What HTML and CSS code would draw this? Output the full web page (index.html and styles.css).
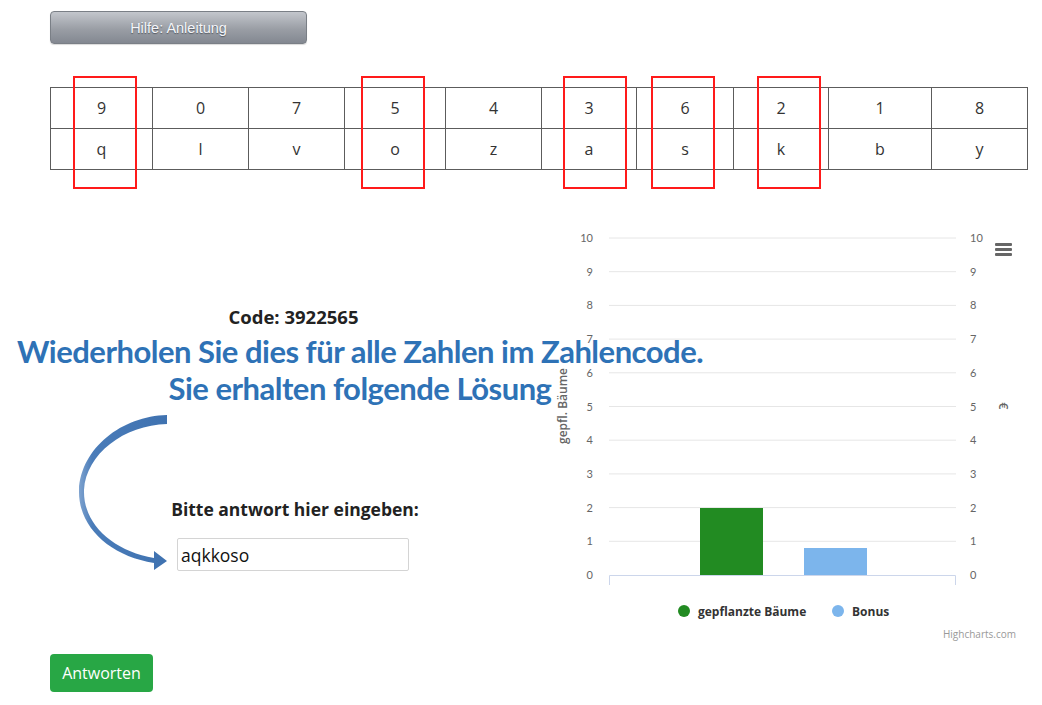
FILE: index.html
```html
<!DOCTYPE html>
<html lang="de">
<head>
<meta charset="utf-8">
<title>Zahlencode</title>
<link rel="stylesheet" href="styles.css">
</head>
<body>
<div class="page">
  <header class="toolbar">
    <button class="help-btn" type="button">Hilfe: Anleitung</button>
  </header>

  <section class="cipher">
    <table class="cipher-table">
      <colgroup>
        <col class="w102"><col class="w96"><col class="w96"><col class="w101"><col class="w96">
        <col class="w95"><col class="w97"><col class="w95"><col class="w103"><col class="w96">
      </colgroup>
      <tr><td>9</td><td>0</td><td>7</td><td>5</td><td>4</td><td>3</td><td>6</td><td>2</td><td>1</td><td>8</td></tr>
      <tr><td>q</td><td>l</td><td>v</td><td>o</td><td>z</td><td>a</td><td>s</td><td>k</td><td>b</td><td>y</td></tr>
    </table>
    <div class="mark mark-1"></div>
    <div class="mark mark-2"></div>
    <div class="mark mark-3"></div>
    <div class="mark mark-4"></div>
    <div class="mark mark-5"></div>
  </section>

  <section class="main">
    <div class="answer-col">
      <p class="code">Code: 3922565</p>
      <label class="answer-label" for="answer">Bitte antwort hier eingeben:</label>
      <input class="answer-input" id="answer" type="text" value="aqkkoso">
    </div>
    <div class="chart">
      <svg class="chart-svg" width="480" height="425" viewBox="0 0 480 425">
        <g class="grid">
          <line x1="54" y1="18" x2="401" y2="18"/>
          <line x1="54" y1="51.7" x2="401" y2="51.7"/>
          <line x1="54" y1="85.4" x2="401" y2="85.4"/>
          <line x1="54" y1="119.1" x2="401" y2="119.1"/>
          <line x1="54" y1="152.8" x2="401" y2="152.8"/>
          <line x1="54" y1="186.5" x2="401" y2="186.5"/>
          <line x1="54" y1="220.2" x2="401" y2="220.2"/>
          <line x1="54" y1="253.9" x2="401" y2="253.9"/>
          <line x1="54" y1="287.6" x2="401" y2="287.6"/>
          <line x1="54" y1="321.3" x2="401" y2="321.3"/>
        </g>
        <g class="axis-labels left">
          <text x="38" y="22">10</text>
          <text x="38" y="55.7">9</text>
          <text x="38" y="89.4">8</text>
          <text x="38" y="123.1">7</text>
          <text x="38" y="156.8">6</text>
          <text x="38" y="190.5">5</text>
          <text x="38" y="224.2">4</text>
          <text x="38" y="257.9">3</text>
          <text x="38" y="291.6">2</text>
          <text x="38" y="325.3">1</text>
          <text x="38" y="359">0</text>
        </g>
        <g class="axis-labels right">
          <text x="415" y="22">10</text>
          <text x="415" y="55.7">9</text>
          <text x="415" y="89.4">8</text>
          <text x="415" y="123.1">7</text>
          <text x="415" y="156.8">6</text>
          <text x="415" y="190.5">5</text>
          <text x="415" y="224.2">4</text>
          <text x="415" y="257.9">3</text>
          <text x="415" y="291.6">2</text>
          <text x="415" y="325.3">1</text>
          <text x="415" y="359">0</text>
        </g>
        <text class="axis-title" transform="translate(12,186) rotate(-90)">gepfl. Bäume</text>
        <text class="axis-title" transform="translate(444,186) rotate(90)">€</text>
        <rect class="bar-green" x="145" y="288" width="63" height="67"/>
        <rect class="bar-blue" x="249" y="328" width="63" height="27"/>
        <path class="x-axis" d="M54.5 365 V355.5 H400.5 V365"/>
        <g class="menu-icon">
          <rect x="440" y="23" width="17" height="3" rx="1"/>
          <rect x="440" y="28" width="17" height="3" rx="1"/>
          <rect x="440" y="33" width="17" height="3" rx="1"/>
        </g>
        <circle class="dot-green" cx="129" cy="391" r="6"/>
        <text class="legend" x="143" y="396">gepflanzte Bäume</text>
        <circle class="dot-blue" cx="283" cy="391" r="6"/>
        <text class="legend" x="297" y="396">Bonus</text>
        <text class="credits" x="461" y="418">Highcharts.com</text>
      </svg>
    </div>
  </section>

  <button class="submit-btn" type="button">Antworten</button>

  <div class="note">
    <p class="note-line">Wiederholen Sie dies für alle Zahlen im Zahlencode.</p>
    <p class="note-line">Sie erhalten folgende Lösung</p>
  </div>

  <svg class="arrow" width="110" height="170" viewBox="70 410 110 170">
    <defs>
      <linearGradient id="arrowGrad" x1="0" y1="0" x2="1" y2="0">
        <stop offset="0" stop-color="#7fa3cf"/>
        <stop offset="0.15" stop-color="#4a7cb9"/>
        <stop offset="1" stop-color="#3f72b0"/>
      </linearGradient>
    </defs>
    <path fill="url(#arrowGrad)" d="M167 415 C122 416 81 448 79 490 C78 527 110 556 154 563 L154 570 L167 561 L154 551 L154 558 C113 551 83 524 84 490 C86 454 124 425 167 424 Z"/>
  </svg>
</div>
</body>
</html>
```

FILE: styles.css
```css
html, body {
  margin: 0;
  padding: 0;
  background: #ffffff;
}

body {
  font-family: "Open Sans", "Noto Sans", "Liberation Sans", sans-serif;
  color: #222;
}

.page {
  position: relative;
  width: 1042px;
  height: 705px;
  box-sizing: border-box;
  padding: 11px 0 0 50px;
  overflow: hidden;
}

.toolbar {
  display: flex;
}

.help-btn {
  width: 257px;
  height: 33px;
  border: 1px solid #7a7f86;
  border-radius: 4px;
  background: linear-gradient(#c3c6cc, #9a9ea5 55%, #838891);
  color: #f4f6fa;
  font-family: "Liberation Sans", Arial, sans-serif;
  font-size: 14.5px;
  text-shadow: 0 1px 1px #555a62;
  box-shadow: 0 1px 1px rgba(0,0,0,0.15);
  padding: 0;
}

.cipher {
  position: relative;
  margin-top: 43px;
  width: 977px;
}

.cipher-table {
  width: 977px;
  table-layout: fixed;
  border-collapse: collapse;
  font-family: "Open Sans", "Noto Sans", sans-serif;
  font-size: 16px;
  color: #333;
}

.cipher-table td {
  border: 1px solid #5c5c5c;
  height: 40px;
  padding: 0;
  text-align: center;
  vertical-align: middle;
}

.w95 { width: 95px; }
.w96 { width: 96px; }
.w97 { width: 97px; }
.w101 { width: 101px; }
.w102 { width: 102px; }
.w103 { width: 103px; }

.mark {
  position: absolute;
  top: -11px;
  width: 60px;
  height: 109px;
  border: 2px solid #ff1a1a;
}

.mark-1 { left: 23px; }
.mark-2 { left: 311px; }
.mark-3 { left: 513px; }
.mark-4 { left: 601px; }
.mark-5 { left: 707px; }

.main {
  display: flex;
  margin-top: 50px;
  height: 425px;
}

.answer-col {
  width: 490px;
  display: flex;
  flex-direction: column;
  align-items: center;
}

.code {
  margin: 86px 0 0 -3px;
  line-height: 22px;
  font-size: 18.5px;
  font-weight: 700;
  color: #222;
}

.answer-label {
  margin-top: 170px;
  line-height: 22px;
  font-size: 17.5px;
  font-weight: 700;
  color: #222;
}

.answer-input {
  margin-top: 18px;
  margin-right: 4px;
  width: 232px;
  height: 33px;
  box-sizing: border-box;
  border: 1px solid #d4d4d4;
  border-radius: 2px;
  padding: 0 3px;
  font-family: "Open Sans", "Noto Sans", sans-serif;
  font-size: 17.5px;
  color: #111;
}

.chart {
  margin-left: 15px;
}

.chart-svg {
  display: block;
}

.grid line {
  stroke: #e6e6e6;
  stroke-width: 1;
}

.axis-labels text {
  font-family: "Lato", "DejaVu Sans", sans-serif;
  font-size: 11px;
  fill: #666;
}

.axis-labels.left text {
  text-anchor: end;
}

.axis-labels.right text {
  text-anchor: start;
}

.axis-title {
  font-family: "Open Sans", "Noto Sans", sans-serif;
  font-size: 12px;
  font-weight: 600;
  fill: #666;
  text-anchor: middle;
}

.bar-green { fill: #228b22; }
.bar-blue { fill: #7cb5ec; }

.x-axis {
  fill: none;
  stroke: #ccd6eb;
  stroke-width: 1;
}

.menu-icon rect { fill: #666; }

.dot-green { fill: #228b22; }
.dot-blue { fill: #7cb5ec; }

.legend {
  font-family: "Open Sans", "Noto Sans", sans-serif;
  font-size: 12px;
  font-weight: 700;
  fill: #333;
}

.credits {
  font-family: "Open Sans", "Noto Sans", sans-serif;
  font-size: 10px;
  fill: #999;
  text-anchor: end;
}

.submit-btn {
  display: block;
  margin-top: 9px;
  width: 103px;
  height: 38px;
  border: none;
  border-radius: 4px;
  background: #28a745;
  color: #fff;
  font-family: "Open Sans", "Noto Sans", sans-serif;
  font-size: 16px;
  padding: 0;
}

.note {
  position: absolute;
  left: 0;
  top: 333px;
  width: 720px;
  text-align: center;
  font-family: "Lato", "Open Sans", sans-serif;
  font-weight: 700;
  font-size: 31px;
  letter-spacing: -0.5px;
  color: #2e72b6;
}

.note-line {
  margin: 0;
  line-height: 37px;
}

.arrow {
  position: absolute;
  left: 70px;
  top: 410px;
}
```
